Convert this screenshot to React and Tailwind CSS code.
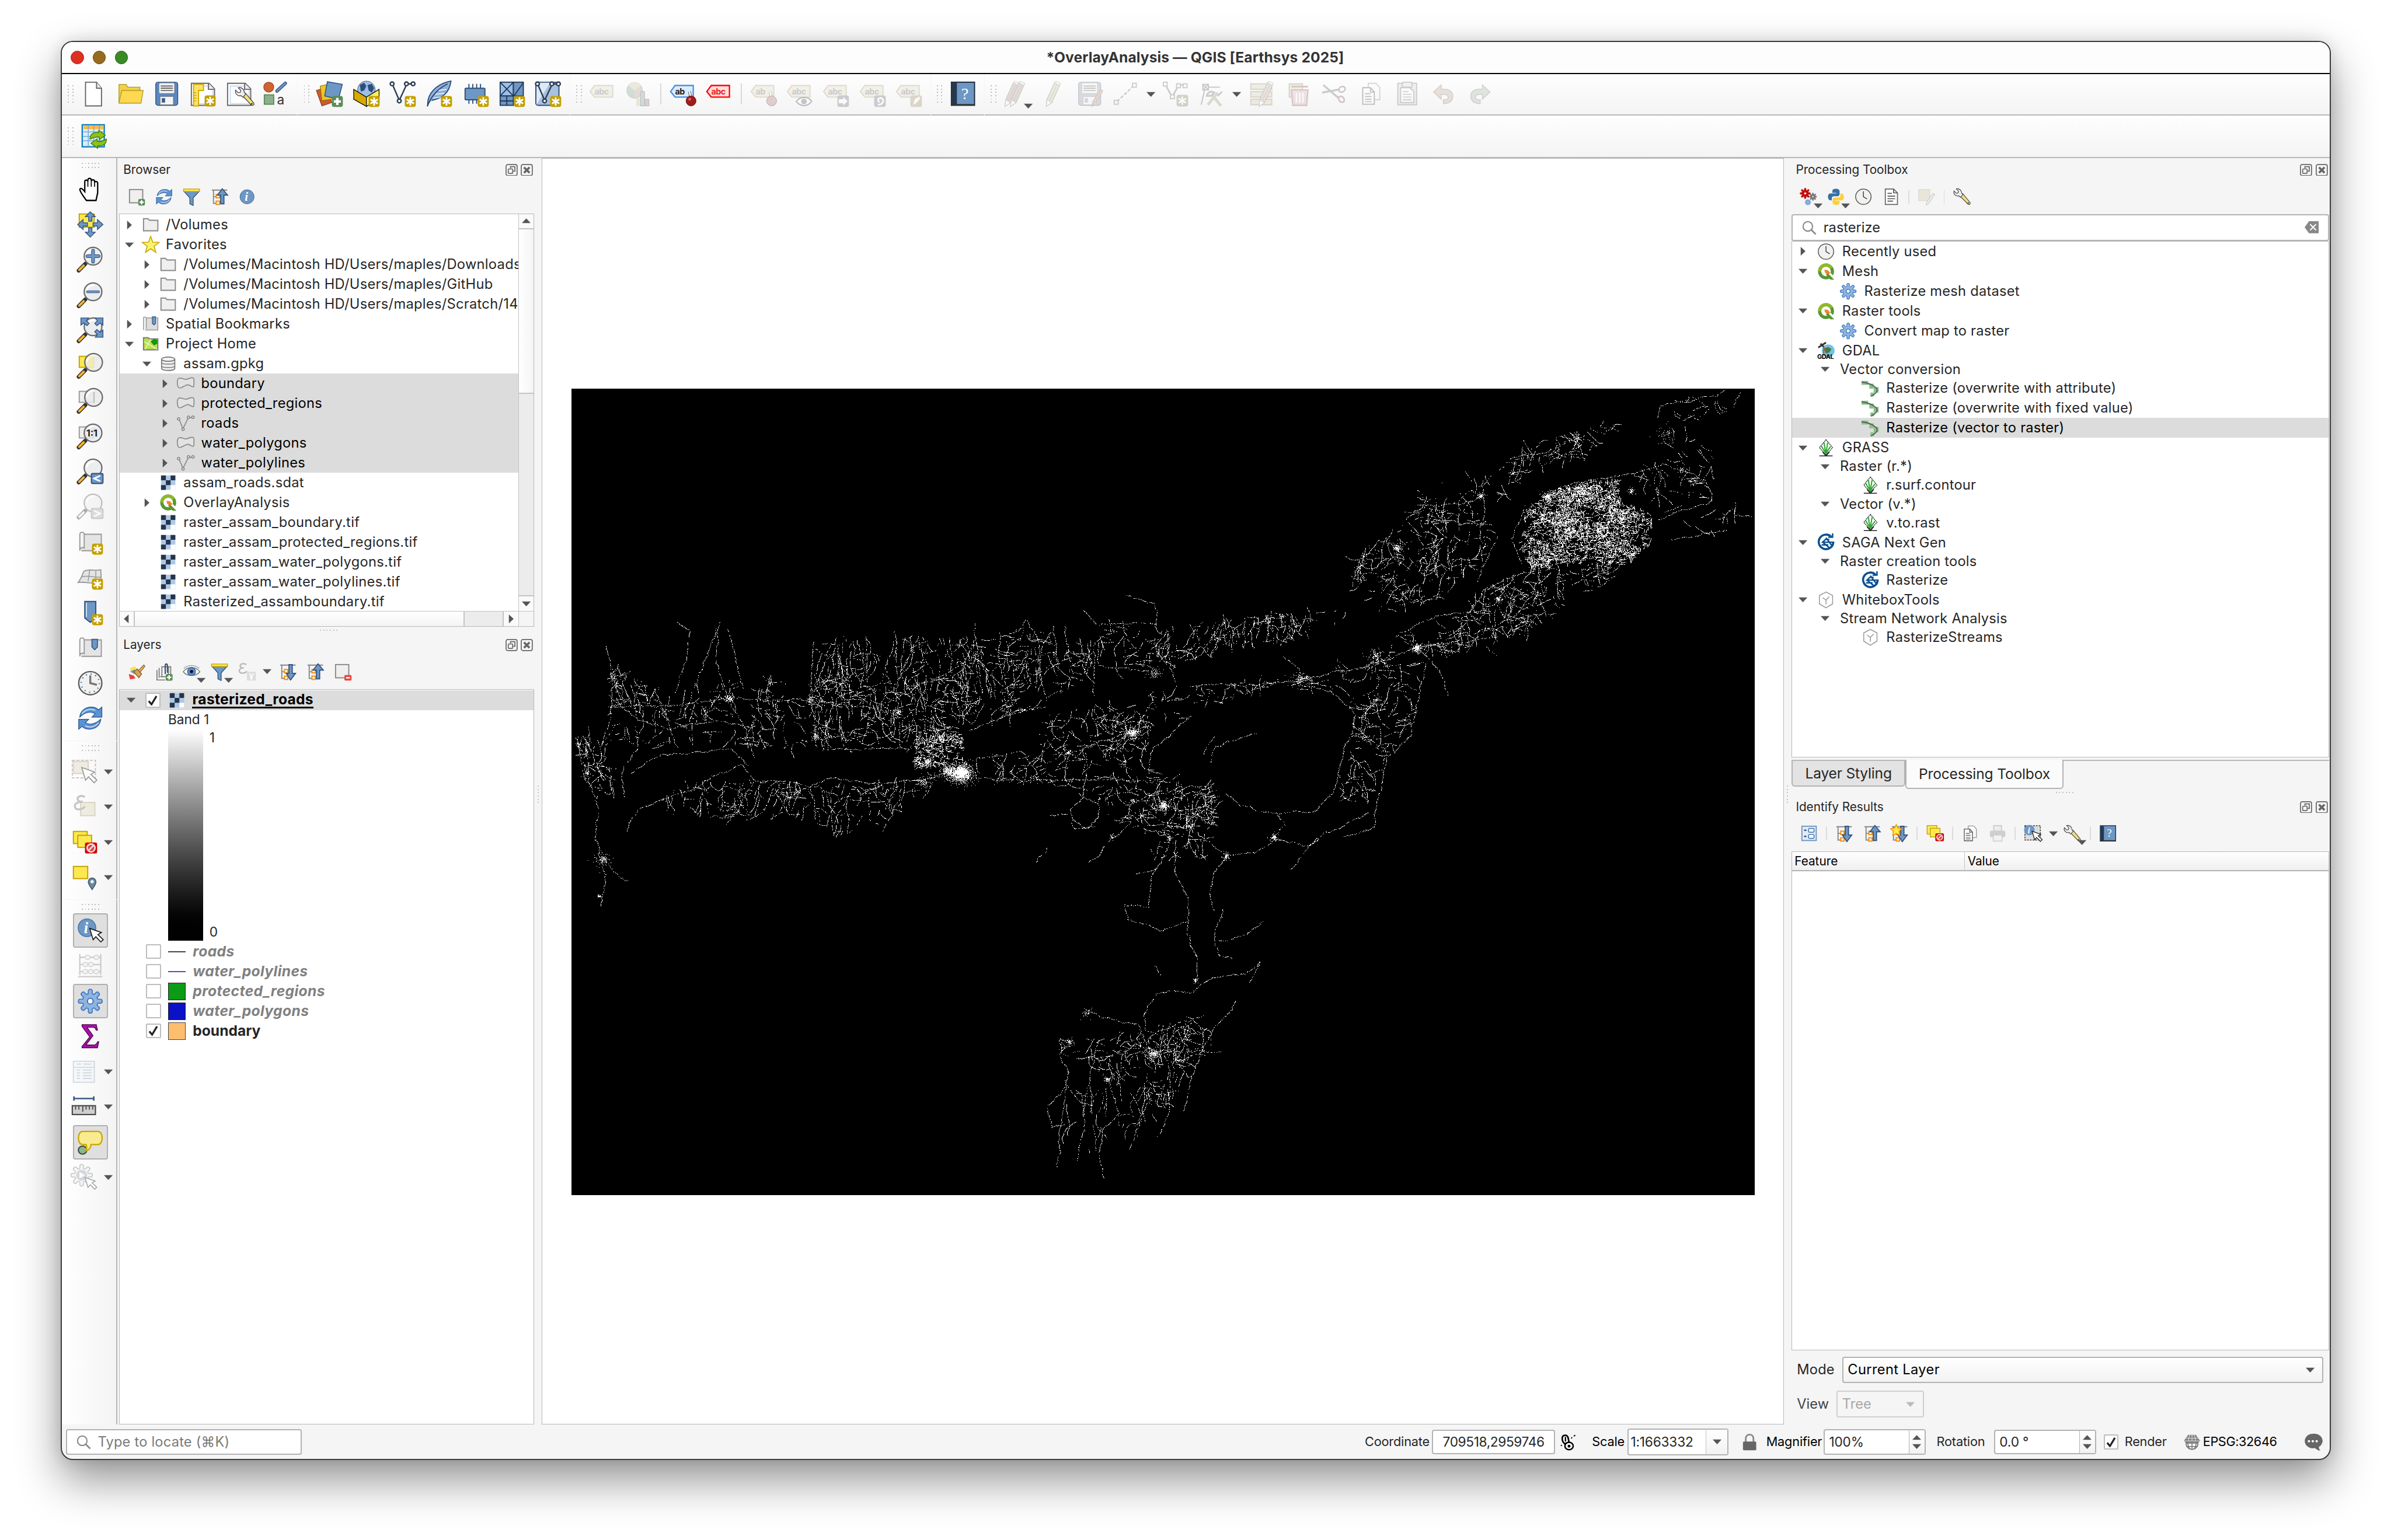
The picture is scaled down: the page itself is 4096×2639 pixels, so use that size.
import React, { useMemo } from "react";

/* ---------- icon helpers ---------- */
const S = ({ c = "size-6", v = "0 0 24 24", children }) => (
  <svg viewBox={v} className={c + " block shrink-0 overflow-visible"} fill="none">{children}</svg>
);
const Star = ({ x = 14, y = 14, s = 1 }) => (
  <g transform={`translate(${x} ${y}) scale(${s})`}>
    <rect x="0" y="0" width="10" height="10" rx="2" fill="#c4a000" />
    <path d="M5 1.2v7.6M1.7 3.1l6.6 3.8M8.3 3.1L1.7 6.9" stroke="#fff" strokeWidth="1.5" />
  </g>
);
const Plus = ({ x = 14, y = 14, s = 1 }) => (
  <g transform={`translate(${x} ${y}) scale(${s})`}>
    <rect width="10" height="10" rx="2" fill="#5a8c5a" />
    <path d="M5 1.8v6.4M1.8 5h6.4" stroke="#fff" strokeWidth="2.2" />
  </g>
);
const Cursor = ({ t }) => (
  <path transform={t} d="M0 0l2.6 8.6 2-2.3 3.8 4 1.8-1.8-4-3.8 2.6-1.6z" fill="#fff" stroke="#111" strokeWidth=".7" />
);
const Forbid = ({ x, y, s = 1 }) => (
  <g transform={`translate(${x} ${y}) scale(${s})`}>
    <rect width="11" height="10" rx="1.5" fill="#d40000" />
    <circle cx="5.5" cy="5" r="3.6" stroke="#f4dada" strokeWidth="1.4" fill="#d84040" />
    <path d="M3.2 7.3l4.6-4.6" stroke="#f4dada" strokeWidth="1.4" />
  </g>
);

/* ---------- main tool bar ---------- */
const NewDoc = () => (
  <S><path d="M4.5 1.5h10l4.5 5.5v16H4.5z" fill="#fff" stroke="#666" /><path d="M14.5 1.5V7H19" fill="#e8e8e8" stroke="#666" /></S>
);
const Open = () => (
  <S><path d="M2 20.5V3.5h6.5L10 6h11v3" fill="#f5cf45" stroke="#ab9a2b" strokeWidth=".7" /><path d="M2 20.5L4.5 9H24l-2 11.5z" fill="#fdd850" stroke="#b39a2b" strokeWidth=".7" /></S>
);
const Save = ({ pencil }) => (
  <S>
    <rect x="2" y="1.5" width="20" height="21" rx="2" fill={pencil ? "#9aa6b4" : "#5b87c0"} stroke={pencil ? "#667" : "#35507a"} strokeWidth=".7" />
    <rect x="5" y="2.2" width="14" height="9.5" rx="1" fill="#f4f4f4" stroke="#888" strokeWidth=".5" />
    <path d="M6.5 5h11M6.5 7h11M6.5 9h11" stroke="#555" strokeWidth=".9" />
    <rect x="6" y="14.5" width="12" height="7.5" rx=".6" fill="#f4f4f4" stroke="#777" strokeWidth=".5" />
    <rect x="7.5" y="16" width="3" height="4" fill={pencil ? "#99a" : "#3a5d8c"} />
    {pencil && <path d="M22 8l2 1.5-7 11-3 3 .8-4.5z" fill="#cc9988" stroke="#765" strokeWidth=".6" />}
  </S>
);
const Layout = () => (
  <S>
    <path d="M1.5 2.5h16l5 5v15h-21z" fill="#fff" stroke="#666" /><path d="M4 5h13v3h4v13H4z" stroke="#c9dbf6" strokeWidth="1" />
    <path d="M17 2.5v5.5h5.5" fill="#eee" stroke="#666" />
    <path d="M3.5 3.500h9v5.500H8v14H3.500z" fill="#fce468" stroke="#d4a800" /><path d="M4 11h2M4 13.500h2M4 16h2M4 18.500h2" stroke="#c4a000" strokeWidth=".7" />
    <Star x={13.500} y={13.500} />
  </S>
);
const WrenchG = ({ t }) => (
  <g transform={t}>
    <path d="M9.500 7.500l1.800-1.300 8.700 10.500c1.100 1.600-.9 3.400-2.400 2.200L8.800 9.800z" fill="#f3dd83" stroke="#333" strokeWidth=".7" />
    <path d="M1 3.200C-.2 6.500 3 10 6.800 9l1.900 1.800 2.900-3.600-1.400-1.500C10 2.300 7-.3 3.700.6l2.600 2.800-.5 2.100-2.200.4z" fill="#eee" stroke="#444" strokeWidth=".8" />
    <circle cx="18" cy="17.500" r="1" fill="#555" />
  </g>
);
const LayoutManager = () => (
  <S>
    <path d="M1.500 2.500h16l5 5v15h-21z" fill="#fff" stroke="#666" /><path d="M4 5h13v3h4v13H4z" stroke="#c9dbf6" /><path d="M17 2.500v5.500h5.500" fill="#eee" stroke="#666" />
    <WrenchG t="translate(8 6) scale(.86)" />
  </S>
);
const StyleMgr = () => (
  <S>
    <circle cx="5.500" cy="6" r="4.500" fill="#ce6432" stroke="#a04a20" strokeWidth=".7" /><path d="M20.500 2.500l-7.500 7" stroke="#2d4f7c" strokeWidth="3" strokeLinecap="round" /><path d="M20.500 2.500l-7.500 7" stroke="#6d97c4" strokeWidth="1.600" strokeLinecap="round" />
    <rect x="1.500" y="13" width="8.500" height="8.500" fill="#8fb08f" stroke="#5a8c5a" />
    <text x="13" y="21.500" fontSize="12" fill="#333">a</text>
  </S>
);
const DataSource = () => (
  <S>
    <path d="M0 9l8-2.500L14 20 5 23z" fill="#ce5b2a" stroke="#80391b" strokeWidth=".6" /><path d="M3.500 5l9-2 2.500 14-10 1.200z" fill="#edc526" stroke="#8a7010" strokeWidth=".6" />
    <path d="M10 1l13.500 2.500L20 17 7.500 14z" fill="#6d97c4" stroke="#2d4f7c" strokeWidth=".8" /><Plus />
  </S>
);
const Geopackage = () => (
  <S>
    <circle cx="12" cy="8.500" r="8" fill="#9dbfe6" stroke="#456" strokeWidth=".5" /><path d="M6 4l4-2 2 3-2 4-3 1zM13 4l4-1 2 4-2 4-3-2z" fill="#2d4f7c" />
    <path d="M.5 8L12 15v8.500L.5 17z" fill="#d6aa00" stroke="#111" strokeWidth=".7" /><path d="M23.500 8L12 15v8.500L23.500 17z" fill="#fcf060" stroke="#111" strokeWidth=".7" /><Star />
  </S>
);
const VPath = ({ c = "#2d3f57", w = 1.300 }) => (
  <g stroke={c} strokeWidth={w} fill="#fff"><path d="M3 4l6 14M9 18l6.500-14M17 3h4" /><circle cx="2.500" cy="3" r="1.700" /><circle cx="9" cy="18.500" r="1.700" /><circle cx="15.500" cy="3" r="1.700" /><circle cx="21.500" cy="3" r="1.700" /></g>
);
const NewShape = () => (<S><VPath /><Star /></S>);
const Feather = () => (
  <S><path d="M2 23C1 12 10 3 23 .5c-1 9-6 15.500-17.500 17.500" fill="#8fb1da" stroke="#2d4f7c" strokeWidth="1" /><path d="M1.500 23.500C5 14 12 7 20 3" stroke="#203a5c" strokeWidth=".9" /><path d="M7 16l7-1M9 12.500l8-1M12 9l7-1" stroke="#fff" strokeWidth=".7" /><Star /></S>
);
const Chip = () => (
  <S><path d="M6 3v18M9.500 3v18M13 3v18M16.500 3v18" stroke="#2d4f7c" strokeWidth="1" /><rect x="2.500" y="7" width="18" height="10.500" rx="1" fill="#6d97c4" stroke="#2d4f7c" /><Star /></S>
);
const Mesh = () => (
  <S><rect x="1.500" y="1.500" width="12" height="12.500" fill="#9dbfe6" stroke="#203a5c" /><path d="M1.500 1.500l12 12.500M13.500 1.500l-12 12.500" stroke="#203a5c" /><rect x="13.500" y="1.500" width="9" height="12.500" fill="#6d97c4" stroke="#203a5c" /><path d="M14 14L22.500 2" stroke="#203a5c" /><rect x="1.500" y="14" width="12" height="8.500" fill="#6d97c4" stroke="#203a5c" /><path d="M7.500 14v8.500M1.500 18.500h12" stroke="#203a5c" /><Star /></S>
);
const Virtual = () => (
  <S><rect x="1" y="1.500" width="21" height="21" rx="2" fill="#a9c0de" stroke="#2d4f7c" /><path d="M1.500 22L14 2h-12z" fill="#dfe9f5" /><VPath /><Star /></S>
);
const TagShape = ({ red, blue, txt = "abc" }) => (
  <g>
    <path d="M1 10l4-5.500h16.500V15H5z" fill={red ? "#ffdede" : blue ? "#dcecff" : "#e4dfc6"} stroke={red ? "#f00" : blue ? "#4a90e2" : "#a8a180"} strokeWidth={red || blue ? 1.200 : 1} />
    <text x="5" y="12.600" fontSize="7.600" fontWeight="700" fill={red ? "#e22" : blue ? "#222" : "#777"} letterSpacing="-.3">{txt}</text>
  </g>
);
const Tag = ({ red }) => (<S><TagShape red={red} /></S>);
const PinTag = ({ blue }) => (
  <S><TagShape blue={blue} txt="ab" /><path d="M18 10l1.500 6" stroke="#555" strokeWidth="2.600" /><path d="M18 10l1.500 6" stroke="#fff" strokeWidth="1.500" /><circle cx="19.500" cy="18.500" r="4.500" fill={blue ? "#a01c1c" : "#a88"} stroke="#600" strokeWidth=".5" /><circle cx="18.300" cy="17" r="1.300" fill="#d66" /></S>
);
const Diagram = () => (
  <S><circle cx="8.500" cy="9" r="7" fill="#c0a0a0" stroke="#777" strokeWidth=".7" /><path d="M8.500 9v7A7 7 0 0 1 3 4.500z" fill="#8aa898" /><path d="M8.500 9L3 4.500a7 7 0 0 1 11 0z" fill="#d0c99c" /><rect x="10" y="16" width="4" height="7" fill="#d0c99c" /><rect x="14" y="10" width="3.500" height="13" fill="#8aa898" stroke="#555" strokeWidth=".6" /><rect x="18" y="17" width="3.500" height="6" fill="#a88" stroke="#555" strokeWidth=".6" /></S>
);
const EyeTag = () => (<S><TagShape /><path d="M9 19c4-5 11-5 14 0-4 5-10 5-14 0z" fill="#fff" stroke="#444" /><circle cx="16" cy="19" r="2.600" fill="#667" /></S>);
const BadgeTag = ({ k }) => (
  <S><TagShape /><rect x="13.500" y="13.500" width="10.500" height="10.500" rx="2" fill={k === 2 ? "#a79a70" : "#777e86"} />
    {k === 0 && <path d="M14.800 17h4v-2l4 3.800-4 3.800v-2h-4z" fill="#fff" />}
    {k === 1 && <path d="M17 22c5 0 6-5 3-6s-4 3-1.500 3.500" stroke="#fff" strokeWidth="1.600" />}
    {k === 2 && <path d="M16 22l1.500-5 4-2.500.8 2-3.500 4z" fill="#fff" />}
  </S>
);
const Help = ({ c = "size-6" }) => (
  <S c={c}><rect x="1.500" y="1.500" width="21" height="21" fill="#6d97c4" stroke="#1c2733" /><rect x="2" y="2" width="4.500" height="20" fill="#25384d" /><path d="M2 22h20" stroke="#333" strokeWidth="1.500" /><text x="10.500" y="17" fontSize="15" fill="#fff" fontFamily="Liberation Serif">?</text></S>
);
const PencilG = ({ t, f = "#e5da9a" }) => (
  <g transform={t}><path d="M5 17.500L12 2l4.500 2.500-7 15.500L4.500 23.500z" fill={f} stroke="#777" strokeWidth=".7" /><path d="M12 2l1-1.500 4.500 2-1 2z" fill="#f4f4f4" stroke="#777" strokeWidth=".5" /><path d="M5 17.500L4.500 23.500l5-3.500z" fill="#fff" stroke="#777" strokeWidth=".5" /><path d="M7.500 18l6.500-14" stroke="#888" strokeWidth=".6" /></g>
);
const Pencils = () => (<S><PencilG t="translate(-3 0)" f="#bfa296" /><PencilG t="translate(2 0)" f="#bfa296" /></S>);
const Pencil = () => (<S><PencilG t="translate(1 0)" f="#d5d0a8" /></S>);
const SegLine = () => (<S><path d="M4 19L20 4" stroke="#777" strokeWidth="1.300" strokeDasharray="3 1.500" /><rect x="1.500" y="18" width="3.500" height="3.500" fill="#fff" stroke="#777" /><rect x="18" y="2.500" width="3.500" height="3.500" fill="#fff" stroke="#777" /></S>);
const VStar = () => (<S><path d="M3 4l6 11 6-11h5" stroke="#777" strokeWidth="1.500" /><g fill="#fff" stroke="#777"><rect x="1" y="1.500" width="3.500" height="3.500" /><rect x="7.500" y="13" width="3.500" height="3.500" /><rect x="13" y="3" width="3.500" height="3.500" /><rect x="19" y="3" width="3.500" height="3.500" /></g><rect x="13" y="13" width="10.500" height="10.500" rx="2" fill="#8f8a6c" /><path d="M18.200 14.500v7.500M14.800 16.300l6.800 3.900M21.600 16.300l-6.800 3.900" stroke="#fff" strokeWidth="1.500" /></S>);
const Vertex = () => (<S><rect x="3.500" y="3.500" width="5" height="5" fill="#fff" stroke="#666" /><path d="M3.500 3.500l5 5M8.500 3.500l-5 5M9 6h10M5 9L2 22" stroke="#666" /><path d="M8 22l9-11" stroke="#a9a180" strokeWidth="2.500" /><path d="M11 12l9 11" stroke="#a9a180" strokeWidth="2.500" /><path d="M7 14c1-4 4-5 7-3l-3 3zM17 14l4-4" stroke="#777" strokeWidth="1.500" fill="#ddd" /></S>);
const FieldsEdit = () => (<S><g fill="#d8d4b8" stroke="#98926c"><rect x="2" y="3" width="19" height="5" /><rect x="2" y="10" width="19" height="5" /><rect x="2" y="17" width="19" height="5" /></g><PencilG t="translate(5 0)" f="#cfb4a8" /></S>);
const Trash = () => (<S><rect x="4" y="3" width="12" height="12" fill="#d8d4b8" stroke="#98926c" /><path d="M6 8.500h15l-1.200 14H7.200z" fill="#d8b8bb" stroke="#9a6a6c" strokeWidth="1.200" /><path d="M6 5.500h15" stroke="#9a6a6c" strokeWidth="1.600" /><path d="M10.500 11v9M13.500 11v9M16.500 11v9" stroke="#fff" strokeWidth="1.200" /></S>);
const Scissors = () => (<S><path d="M2 4l14 12M1 11l16-3" stroke="#777" strokeWidth="1.800" /><ellipse cx="19" cy="8" rx="3" ry="2.400" stroke="#866" strokeWidth="1.400" transform="rotate(-30 19 8)" /><ellipse cx="18.500" cy="17" rx="3" ry="2.200" stroke="#866" strokeWidth="1.400" transform="rotate(50 18.500 17)" /></S>);
const Copy = ({ c = "size-6" }) => (<S c={c}><path d="M9.500 2.500h7l3.500 4v11h-10.500z" fill="#fafafa" stroke="#999" /><path d="M4.500 6.500h7l3.500 4v11H4.500z" fill="#fff" stroke="#555" /><path d="M11.500 6.500v4H15M6.500 12h5M6.500 14.500h6M6.500 17h6M6.500 19.200h6" stroke="#555" strokeWidth=".9" /></S>);
const Paste = () => (<S><rect x="3.500" y="2.500" width="17" height="19.500" fill="#e0dad4" stroke="#777" /><path d="M6 6.500h8.500L18 10v10H6z" fill="#fff" stroke="#777" /><rect x="7.500" y="1.500" width="9" height="4.500" rx="1" fill="#ddd" stroke="#777" /><path d="M8 10h5M8 12.500h8M8 15h8M8 17.500h8" stroke="#888" /></S>);
const Undo = ({ flip }) => (<S><path transform={flip ? "translate(24 0) scale(-1 1)" : ""} d="M3 10.500L10 4v4c8-1 12 3 10 9-1 3-4 4-8 4v-3.500c4 0 5-1.500 4-3.500-1-1.500-3-1.500-6-1.500V17z" fill={flip ? "#aebcb4" : "#c9b0a2"} stroke="#887" strokeWidth=".8" /></S>);
const TableRefresh = () => (
  <S>
    <rect x="1.500" y="1.500" width="20" height="20" fill="#d6f0fa" stroke="#0a7cc0" strokeWidth="1.200" /><rect x="2.500" y="2.500" width="18" height="3" fill="#fbb848" /><path d="M7 2v19M12 2v19M17 2v19M2 8h19M2 12h19M2 16h19" stroke="#7aa8d8" strokeWidth=".8" />
    <path d="M8.500 14.500c0-5 4-6.500 8-6V6.500l6 4.500-5.500 4v-2.300c-3-.5-5 .3-8.500 1.800z" fill="#8ec412" stroke="#3d7a00" strokeWidth=".7" /><path d="M23.500 14.500c0 5-4 6.500-8 6v2.300l-6-4.500 5.500-4v2.300c3 .5 5-.3 8.500-2.100z" fill="#8ec412" stroke="#3d7a00" strokeWidth=".7" />
  </S>
);

/* ---------- map tools ---------- */
const Hand = () => (<S><path d="M8.500 22.500C6 19 3 15.500 2.500 12.500c.3-1.500 2-1.300 4.500 2V5.500c0-2 2.600-2 2.800 0V4c.2-2 3-2 3.100 0v1c.3-1.700 2.900-1.600 3 .2v1c.4-1.400 2.700-1.200 2.800.6v8.700l-1.500 7z" fill="#fff" stroke="#000" strokeWidth="1.200" /><path d="M9.800 5.500V10M12.900 5v5M15.900 6v4" stroke="#000" strokeWidth=".9" /></S>);
const PanSel = () => (<S><rect x="2" y="2.500" width="13.500" height="12" fill="#fce94f" stroke="#c4a000" /><g fill="#6d97c4" stroke="#2d4f7c" strokeWidth=".7"><path d="M12 .5L16.500 5h-3v4h-3V5h-3z" /><path d="M12 23.500L16.500 19h-3v-4h-3v4h-3z" /><path d="M.5 12L5.500 7.500v3h4v3h-4v3z" /><path d="M23.500 12l-5-4.500v3h-4v3h4v3z" /></g></S>);
const Mag = ({ dim, children, cx = 14.500 }) => (
  <g>
    <path d="M1.500 22l6-6" stroke="#333" strokeWidth="3.600" strokeLinecap="round" /><path d="M2 21.500l4-4" stroke={dim ? "#eee" : "#fcb827"} strokeWidth="2" strokeLinecap="round" />
    <circle cx={cx} cy="9" r="8" fill="#e9eaec" fillOpacity=".82" stroke="#6b6b6b" strokeWidth="1.200" />
    <path d="M9 8c0-3 3-5 6-5" stroke="#fff" strokeWidth="1.500" strokeLinecap="round" />{children}
  </g>
);
const ZoomIn = () => (<S><Mag><path d="M14.500 4v10M9.500 9h10" stroke="#2d4f7c" strokeWidth="3.200" strokeLinecap="round" /><path d="M14.500 4v10M9.500 9h10" stroke="#6d97c4" strokeWidth="2.200" strokeLinecap="round" /></Mag></S>);
const ZoomOut = () => (<S><Mag><path d="M9.500 9h10" stroke="#2d4f7c" strokeWidth="2.400" strokeLinecap="round" /><path d="M9.500 9h10" stroke="#6d97c4" strokeWidth="1.500" strokeLinecap="round" /></Mag></S>);
const ZoomFull = () => (<S><Mag /><g fill="#6d97c4" stroke="#2d4f7c" strokeWidth=".7"><path d="M3.500 1h7L8.500 3.500 11 6 9 8 6 5.500l-2.500 2z" /><path d="M23.500 1h-7l2 2.500L16 6l2 2 3-2.500 2.500 2z" /><path d="M23.500 18.500h-7l2-2.500L16 13.500l2-2 3 2.500 2.500-2z" /></g></S>);
const ZoomSel = () => (<S><rect x="2" y="3.500" width="13" height="10" fill="#fce94f" stroke="#c4a000" /><Mag cx={15}><path d="M11 3h4v12h-4z" fill="#f5ec9c" opacity=".6" /></Mag></S>);
const ZoomLayer = () => (<S><rect x="2" y="3.500" width="13" height="10" fill="#eee" stroke="#999" /><Mag cx={15}><path d="M15.500 4v10" stroke="#bbb" /></Mag></S>);
const ZoomNative = () => (<S><rect x="2" y="3.500" width="13" height="10" fill="#eee" stroke="#999" /><Mag><text x="8.300" y="12" fontSize="8.600" fontWeight="700" fill="#222">1:1</text></Mag></S>);
const ZoomLast = ({ next }) => (<S><Mag dim={next} /><rect x="13" y="14" width="10.500" height="9" rx="1" fill={next ? "#aab2bc" : "#6d97c4"} stroke={next ? "#888" : "#2d4f7c"} /><path d={next ? "M15.500 16l5.500 2.500-5.500 2.500" : "M21 16l-5.500 2.500 5.500 2.500"} stroke="#fff" strokeWidth="1.500" /></S>);
const MapScroll = ({ mark }) => (<S><path d="M4 5h18v15H4" fill="#e4e4e4" stroke="#999" /><path d="M2.500 19.500v-14c0-3 4-3 4 0v12c-2-1-4 0-4 2.500z" fill="#f4f4f4" stroke="#999" />{mark ? <path d="M13.500 4.500h5v7L16 14l-2.500-2.500z" fill="#6d97c4" stroke="#2d4f7c" strokeWidth=".8" /> : <Star x={13.500} y={13.500} />}</S>);
const Map3d = () => (<S><path d="M1 17C4 13 5 10 6 7c5-3 10 0 15.500-1.500L22 17c-7 2-14-1-21 0z" fill="#e4e4e4" stroke="#999" /><path d="M11.500 6L10 16M17 6.500v10M4 12c6-2 12 1 18 0" stroke="#999" strokeWidth=".8" /><Star x={13.500} y={13.500} /></S>);
const BookmarkNew = () => (<S><path d="M7 2h10v15l-5 4-5-4z" fill="#6d97c4" stroke="#2d4f7c" /><path d="M8.500 3v13" stroke="#cfe0f3" /><Star x={13.500} y={13.500} /></S>);
const Clock = ({ c = "size-6", simple }) => (<S c={c}><circle cx="12" cy="12" r="10.500" fill="#f1f1ef" stroke="#5a5a5a" strokeWidth="1.200" />{!simple && <circle cx="12" cy="12" r="8.300" stroke="#4a79b5" strokeWidth="1.300" strokeDasharray="1 3.350" />}<path d={simple ? "M12 4.500V12l5 3" : "M12 5v7l6 1.500"} stroke={simple ? "#444" : "#777"} strokeWidth={simple ? 1.200 : 1.800} /></S>);
const Refresh = ({ c = "size-6" }) => (<S c={c}><path d="M2.500 11C3 5 8 2 13 2c3 0 5 1 6.500 2.500L22.500 2v9h-9l3-3C14 6 8 5.500 2.500 11z" fill="#5b92d4" stroke="#2d5a94" strokeWidth=".7" /><path d="M21.500 13c-.5 6-5.500 9-10.500 9-3 0-5-1-6.500-2.500L1.500 22v-9h9l-3 3c2.500 2 8.500 2.500 14-3z" fill="#5b92d4" stroke="#2d5a94" strokeWidth=".7" /><path d="M4.500 8c3-4 8-5 12-3M19.500 16c-3 4-8 5-12 3" stroke="#bfd8f4" /></S>);
const SelRect = () => (<S><rect x="1.500" y="1.500" width="21" height="16" stroke="#777" strokeDasharray="2.500 1.500" /><rect x="2.500" y="2.500" width="13.500" height="11" fill="#ddd6b8" stroke="#a99f70" /><Cursor t="translate(10 8) scale(1.350)" /></S>);
const SelExpr = ({ c = "size-6" }) => (<S c={c}><rect x="9" y="8" width="13" height="12" fill="#ddd6b8" stroke="#a99f70" /><path d="M13 3C9 1 5.500 3 6.500 5.500 7 7 9 7.500 11 7.300 6 7.500 3 9.500 4 12.500c1 2.500 6.500 2.500 9-1" stroke="#777" strokeWidth="1.800" /></S>);
const Desel = ({ c = "size-6" }) => (<S c={c}><rect x="2.500" y="2" width="12.500" height="11" fill="#fce94f" stroke="#c4a000" /><rect x="6.500" y="5.500" width="12.500" height="11" fill="#fce94f" stroke="#c4a000" /><Forbid x={13} y={12} /></S>);
const SelPin = () => (<S><rect x="2.500" y="2" width="13" height="11" fill="#fce94f" stroke="#c4a000" /><path d="M19.500 23c-2-3.500-3.500-4.500-3.500-7a3.500 3.500 0 0 1 7 0c0 2.500-1.500 3.500-3.500 7z" fill="#6b8aa3" stroke="#456" strokeWidth=".8" /><circle cx="19.500" cy="15.800" r="1.400" fill="#fff" /></S>);
const Info = ({ c = "size-6" }) => (<S c={c}><circle cx="12" cy="12" r="11" fill="#6d97c4" stroke="#3c6393" strokeWidth=".8" /><text x="8.500" y="18.500" fontSize="19" fontWeight="700" fontStyle="italic" fill="#fff" fontFamily="Liberation Serif">i</text></S>);
const Identify = () => (<S><circle cx="9" cy="9.500" r="8" fill="#6d97c4" stroke="#4775ab" strokeWidth=".8" /><text x="6.200" y="14.500" fontSize="14" fontWeight="700" fontStyle="italic" fill="#fff" fontFamily="Liberation Serif">i</text><Cursor t="translate(11.500 10) scale(1.200)" /></S>);
const Abacus = () => (<S><path d="M2.500 1.500v19M21.500 1.500v19M1 22h22M3 4.500h18M3 11h18M3 17.500h18" stroke="#888" strokeWidth="1.200" /><g fill="#efe6e6" stroke="#999" strokeWidth=".8"><ellipse cx="9.500" cy="4.500" rx="2.300" ry="2" /><ellipse cx="17.500" cy="4.500" rx="2.300" ry="2" /><ellipse cx="7.500" cy="11" rx="2.300" ry="2" /><ellipse cx="12.500" cy="11" rx="2.300" ry="2" /><ellipse cx="7.500" cy="17.500" rx="2.300" ry="2" /><ellipse cx="12.500" cy="17.500" rx="2.300" ry="2" /><ellipse cx="17.500" cy="17.500" rx="2.300" ry="2" /></g></S>);
const GearG = ({ f, st, cx = 12, cy = 12, s = 1, hole = "#fff" }) => (
  <g transform={`translate(${cx} ${cy}) scale(${s})`}>
    {[0, 45, 90, 135].map((a) => (<rect key={a} x="-1.800" y="-10.800" width="3.600" height="21.600" rx="1.600" transform={`rotate(${a})`} fill={f} stroke={st} strokeWidth=".9" />))}
    <circle r="7" fill={f} stroke={st} strokeWidth=".9" />
    {[0, 45, 90, 135].map((a) => (<rect key={a} x="-1.400" y="-8" width="2.800" height="16" transform={`rotate(${a})`} fill={f} />))}
    <circle r="2.600" fill={hole} stroke={st} strokeWidth="1.100" />
  </g>
);
const Gear = ({ c = "size-6" }) => (<S c={c}><GearG f="#8db4e2" st="#3f76bd" /></S>);
const Sigma = () => (<S><path d="M4.500 1.500h13l1 5h-1.200c-.6-2-1.300-2.600-3.800-2.600H9l5.500 7.600L8 20h6.500c2.500 0 3.500-1 4.200-3h1l-1.200 5.500h-14v-1.200l7-8.600-7-9.700z" fill="#ad11ad" stroke="#4a084a" strokeWidth=".7" /></S>);
const TableI = () => (<S><rect x="2.500" y="2.500" width="19" height="19" fill="#eef3f6" stroke="#9ab" /><path d="M3 8h18" stroke="#9ab" /><path d="M5.500 5h4M11.500 5h7M5.500 10.500h3M11 10.500h8M5.500 13h3M11 13h8M5.500 15.500h3M11 15.500h8M5.500 18h3M11 18h8" stroke="#9ab" strokeWidth="1.100" /></S>);
const Ruler = () => (<S><path d="M3 4.500h18M3 2.500v4M21 2.500v4" stroke="#3c5a80" strokeWidth="1.400" /><rect x="1.500" y="11" width="21" height="8" fill="#cfcfcf" stroke="#444" strokeWidth="1.100" /><path d="M4.500 11.500v3M7.500 11.500v3M11 11.500v5M14 11.500v3M17 11.500v3M20 11.500v3" stroke="#444" strokeWidth=".9" /></S>);
const Tips = () => (<S><ellipse cx="5" cy="19" rx="3.800" ry="3.600" fill="#8ab88a" stroke="#444" strokeWidth="1.100" /><path d="M5 2h14c5 0 5 12 0 12h-6.500c.3 3-2 5-5 6 1.500-2 1.500-4 .8-6H5c-5 0-5-12 0-12z" fill="#f9eb8f" stroke="#c9a800" strokeWidth="1.200" /></S>);
const RunGear = () => (<S><GearG f="#eee" st="#777" cx={10} cy={10} s={.9} hole="#9aa4ae" /><circle cx="10" cy="10" r="5" fill="#9aa4ae" /><path d="M8 7l5 3-5 3z" fill="#fff" /><Cursor t="translate(13 12) scale(1.050)" /></S>);

/* ---------- small icons ---------- */
const Folder = () => (<S c="size-4" v="0 0 16 16"><path d="M1.500 13.500v-11h4l1.500 1.500h7.500v9.500z" fill="#efefef" stroke="#888" strokeWidth="1" /></S>);
const StarI = () => (<S c="size-4" v="0 0 16 16"><path d="M8 .5l1.900 5.300 5.700.2-4.500 3.500 1.600 5.500L8 11.800 3.300 15l1.600-5.500L.4 6l5.700-.2z" fill="#fdf468" stroke="#c4a000" strokeWidth=".8" /></S>);
const SBook = () => (<S c="size-4" v="0 0 16 16"><path d="M3 2.500h11.500v11H3" fill="#ddd" stroke="#999" strokeWidth=".8" /><path d="M1.500 13.500v-11c0-1 2-1 2.500 0v10" fill="#f4f4f4" stroke="#999" strokeWidth=".8" /><path d="M9.500 1.500h3v6L11 9 9.500 7.500z" fill="#6d97c4" stroke="#2d4f7c" strokeWidth=".6" /></S>);
const PHome = () => (<S c="size-4" v="0 0 16 16"><path d="M1.500 13.500v-11h4l1.500 1h7.500v10z" fill="#b9e04e" stroke="#777" /><path d="M2 6l12 7M8 4l-5 9" stroke="#e9f7c0" strokeWidth=".8" /><path d="M8 6l3-2.500 3 1V8l-3 1.500z" fill="#17940f" /></S>);
const Db = () => (<S c="size-4" v="0 0 16 16"><path d="M2 4v8.500c0 2.300 12 2.300 12 0V4" fill="#eee" stroke="#777" strokeWidth=".9" /><path d="M2 7c0 2 12 2 12 0M2 10c0 2 12 2 12 0" stroke="#777" strokeWidth=".8" /><ellipse cx="8" cy="4" rx="6" ry="1.900" fill="#f4f4f4" stroke="#777" strokeWidth=".9" /></S>);
const Poly = () => (<S c="size-4" v="0 0 16 16"><path d="M1.200 3.800C3 1.500 6 5 9 4.200c2.500-.8 4-2 6-1.200.8.500.6 6.500.2 7.800-1 1.200-3.500-2-5.700-1.600-2.500.5-6.500 4-7.800 2.600C.2 10.500 0 5.500 1.200 3.800z" fill="#e2e2e2" stroke="#8a8a8a" strokeWidth=".9" /></S>);
const LineI = () => (<S c="size-4" v="0 0 16 16"><g stroke="#8a8a8a" strokeWidth=".9" fill="#eee"><path d="M2 4.500l3.500 8.500 5-10h4" fill="none" /><circle cx="1.600" cy="4.200" r="1.100" /><circle cx="5.600" cy="13.500" r="1.100" /><circle cx="10.500" cy="2.600" r="1.100" /><circle cx="14.600" cy="2.600" r="1.100" /></g></S>);
const Raster = () => (<S c="size-4" v="0 0 16 16"><rect x="1.500" y="1.500" width="13" height="13" fill="#adc8e8" /><path d="M1.500 1.500h4.400v4.300H1.500zM10.200 1.500h4.300v4.300h-4.300zM5.900 5.800h4.300v4.400H5.900zM1.500 10.200h4.400v4.300H1.500z" fill="#26344a" /><path d="M10.200 10.200h4.300v4.300h-4.300z" fill="#fff" /></S>);
const Qgis = () => (<S c="size-4" v="0 0 16 16"><circle cx="8" cy="8" r="5.800" stroke="#589632" strokeWidth="2.900" /><path d="M2.200 8A5.800 5.800 0 0 1 13 5" stroke="#8fb92a" strokeWidth="2.900" /><path d="M7 7l2.500-.5L15.500 13v2.500H13L6.500 9z" fill="#fff" /><path d="M9 9l6.500 6.500h-3.500L8 11z" fill="#589632" /><path d="M6.500 6.500l3 .3L12 9.500 9.500 11 7 9z" fill="#ee7913" opacity=".9" /></S>);
const Gdal = () => (<S c="size-4" v="0 0 16 16"><circle cx="10" cy="8" r="5.800" fill="#6ec3e8" /><path d="M6 6l4-1.500 3 2-2 3-3 1z" fill="#4a7a3a" /><path d="M1 5l7-4.500M3 1.500l3 3" stroke="#333" strokeWidth="1.600" /><path d="M6 4v7" stroke="#d33" /><text x="0" y="15.500" fontSize="5.800" fontWeight="700" fill="#000" letterSpacing="-.25">GDAL</text></S>);
const Vec2R = () => (<S c="size-4" v="0 0 16 16"><path d="M0 1.500h6V4h5v3h4.500v5h-4v3.500H8V12h3V8.500H7V5H0z" fill="#8cbf8c" /><path d="M0 2.500c5 .5 10 2 13.500 5.500 2 3-1 5-5 7.500" stroke="#4a6a50" strokeWidth="1" /></S>);
const Grass = () => (<S c="size-4" v="0 0 16 16"><path d="M8 .8L14 8l-6 6.500L2 8z" fill="#fff" stroke="#222" strokeWidth=".7" strokeDasharray="1.200 .5" /><path d="M8 13.500C6 10 4.500 8 3.800 6.500M8 13.500C7 9 6.500 6 6.300 3.500M8 13.500c.5-4 1-7 1.500-10M8 13.500c1.500-3 3-5 4.200-6.500" stroke="#2eab2e" strokeWidth="1.100" /><path d="M2 15.500h12M5 12l3 3.500 3-3.500" stroke="#222" strokeWidth=".9" /></S>);
const Saga = () => (<S c="size-4" v="0 0 16 16"><path d="M12.800 3.200A6.600 6.600 0 1 0 14.600 8" stroke="#0b4f93" strokeWidth="1.900" /><path d="M11 5.500H7.500L5 8h10.500M5 8l6 5M4 10.500h6M8 4l6 8M10 3.500h4V0" stroke="#0b4f93" strokeWidth="1.300" /></S>);
const Cube = () => (<S c="size-4" v="0 0 16 16"><path d="M8 .8l6 3.200v7.500L8 15.200 2 11.500V4zM5 6l3 2 3-3M8 8v4" stroke="#999" strokeWidth=".8" /></S>);
const FilterI = () => (<S c="size-4" v="0 0 16 16"><path d="M1 3l5.500 6v5.500L9.500 16V9L15 3z" fill="#6d97c4" stroke="#2d4f7c" strokeWidth=".7" /><path d="M.8 1h14.400v2.200H.8z" fill="#fce94f" stroke="#c4a000" strokeWidth=".7" /></S>);
const Collapse = ({ down, star }) => (<S c="size-4" v="0 0 16 16"><path d="M1 2h14M2.500 2v12.500M2.500 8h3M2.500 14h3" stroke="#888" strokeWidth="1" /><rect x="5" y="6" width="3" height="3" fill="#fff" stroke="#f39214" strokeWidth="1.100" /><rect x="5" y="12" width="3" height="3" fill="#fff" stroke="#f39214" strokeWidth="1.100" /><path d={down ? "M9 1.500h3v8h3L10.500 15.500 6.500 9.500H9z" : "M9 14.500h3v-8h3.300L10.500.8 6 6.500h3z"} fill="#6d97c4" stroke="#2d4f7c" strokeWidth=".9" />{star && <path d="M5 0l1.500 3.300 3.500.4L7.500 6l.7 3.800L5 8 1.800 9.800 2.500 6 0 3.700l3.500-.4z" fill="#fdf03a" stroke="#f39214" strokeWidth=".8" />}</S>);
const AddBox = ({ minus }) => (<S c="size-4" v="0 0 16 16"><rect x="1.500" y="1.500" width="12" height="12" fill="#efefed" stroke="#888" />{minus ? <g><rect x="9.500" y="11" width="6.500" height="5" rx="1" fill="#ef4444" /><path d="M11 13.500h3.500" stroke="#fff" strokeWidth="1.300" /></g> : <Plus x={9.500} y={10} s={.6} />}</S>);
const Brush = () => (<S c="size-4" v="0 0 16 16"><path d="M1.500 5l5-2 3 5-4 3z" fill="#f8e34a" /><path d="M2 8l4-2 2 5z" fill="#6d97c4" /><path d="M.8 10l4.500 1.500L7 14l-5 1z" fill="#ef3d3d" /><path d="M5.500 8l3-2.500 4 4.500-2.500 3.500z" fill="#dba15a" stroke="#8a5a20" strokeWidth=".7" /><path d="M9.500 7l5-5.200 1 1.200-4.500 5.500z" fill="#e8b070" stroke="#8a5a20" strokeWidth=".6" /></S>);
const AddGroup = () => (<S c="size-4" v="0 0 16 16"><path d="M4.500 12.500H12v-9H6v9M1.500 6.500v9H9M3.500 4.500v9M6 3.500h8v8" stroke="#777" strokeWidth=".9" /><path d="M9 10V2.500c0-2 2-2 2 0V9" stroke="#2d4f7c" strokeWidth="1.100" /><Plus x={9.500} y={10} s={.62} /></S>);
const EyeI = () => (<S c="size-4" v="0 0 16 16"><path d="M.5 8C4 3 12 3 15.500 8 12 12.500 4 12.500.5 8z" fill="#fff" stroke="#888" strokeWidth=".9" /><path d="M1 5c4-3.500 10-3.500 14 0" stroke="#aaa" strokeWidth=".9" /><circle cx="8" cy="7.800" r="3.600" fill="#5b92d4" stroke="#2d4f7c" strokeWidth=".6" /><circle cx="8" cy="7.800" r="1.500" fill="#112" /></S>);
const ExprFilter = () => (<S c="size-4" v="0 0 16 16"><path d="M7.500 1.500C4-.5 1 1.500 2 3.500c.5 1 2 1 3 1-2 0-4 .8-4 2.700 0 2.800 5 2.600 7 .4" stroke="#bbb" strokeWidth="1.300" /><rect x="8" y="8" width="8" height="8" fill="#ddd" /><path d="M10 9.500l1.500 2V15M14 9.500l-1.500 2V15" stroke="#fff" /></S>);
const RedGears = () => (<S c="size-4" v="0 0 16 16"><GearG f="#c40f0f" st="#c40f0f" cx={5} cy={5} s={.44} /><GearG f="#777" st="#777" cx={12} cy={8} s={.32} /><GearG f="#6fa0dc" st="#6fa0dc" cx={7.500} cy={13} s={.26} /></S>);
const Python = () => (<S c="size-4" v="0 0 16 16"><path d="M8 .8C5 .8 4.800 2 4.800 3v1.500h3.500V5H3C1.500 5 .8 6.300.8 8s.7 3.200 2.200 3.200h1.300V9.300C4.300 8 5.300 7.500 6.500 7.500h3c1 0 1.800-.8 1.800-1.800V3C11.300 1.600 10 .8 8 .8z" fill="#3571a3" /><path d="M8 15.500c3 0 3.300-1.200 3.300-2.200v-1.500H7.800v-.5H13c1.500 0 2.200-1.300 2.200-3s-.7-3.200-2.200-3.200h-1v1.900c0 1.300-1 1.800-2.200 1.800h-3c-1 0-1.800.8-1.800 1.800v2.700c0 1.400 1.300 2.200 3 2.200z" fill="#fdd03a" /></S>);
const DocI = () => (<S c="size-4" v="0 0 16 16"><path d="M2.500 1h7.500l3.500 3.500V15h-11z" fill="#fff" stroke="#666" strokeWidth=".9" /><path d="M10 1v3.500h3.500M4.500 5h4M4.500 7.500h7M4.500 9.800h7M4.500 12h5" stroke="#555" strokeWidth=".9" /></S>);
const EditBox = () => (<S c="size-4" v="0 0 16 16"><rect x="1" y="1.500" width="10" height="10" fill="#ddd6c0" stroke="#c5bfae" strokeWidth=".7" /><path d="M14 5l1.500 1-5.500 8-2 1.500.3-2.500z" fill="#eee" stroke="#aaa" strokeWidth=".7" /></S>);
const Wrench = () => (<S c="size-4" v="0 0 21 21"><WrenchG t="translate(0 .5)" /></S>);
const FormI = () => (<S c="size-4" v="0 0 16 16"><rect x="1.500" y="1.500" width="13" height="13" fill="#e2ebf6" stroke="#6d97c4" /><rect x="7.500" y="3.500" width="5" height="3.500" rx="1" fill="#fff" stroke="#5580b5" strokeWidth=".9" /><rect x="7.500" y="9" width="5" height="3.500" rx="1" fill="#fff" stroke="#5580b5" strokeWidth=".9" /><path d="M3.500 5.200h2M3.500 10.700h2" stroke="#2d4f7c" strokeWidth="1.300" /></S>);
const Printer = () => (<S c="size-4" v="0 0 16 16"><rect x="4.500" y="1" width="7" height="5" fill="#eee" stroke="#ccc" /><rect x="1" y="5.500" width="14" height="6" rx="1.500" fill="#cfcfcf" /><rect x="4" y="9.500" width="8" height="5.500" fill="#f2f2f2" stroke="#ccc" strokeWidth=".8" /></S>);
const IdRect = () => (<S c="size-4" v="0 0 16 16"><rect x="1" y="1" width="14" height="13" fill="#ddd" stroke="#333" strokeWidth=".8" strokeDasharray="1.500 1" /><circle cx="5" cy="5" r="4.800" fill="#6d97c4" /><text x="3.500" y="8" fontSize="8" fontStyle="italic" fontWeight="700" fill="#fff" fontFamily="Liberation Serif">i</text><Cursor t="translate(7.500 6) scale(.9)" /></S>);
const SearchI = ({ c = "size-3.5" }) => (<S c={c} v="0 0 14 14"><circle cx="5.800" cy="5.800" r="4.300" stroke="#888" strokeWidth="1.100" /><path d="M9 9l4 4" stroke="#888" strokeWidth="1.400" /></S>);
const CoordI = () => (<S c="size-[15px]" v="0 0 16 16"><path d="M2.500 3.500C3 1 7 .5 8 3.500l1 5-4.500 1C3 8 2 6 2.500 3.500z" fill="#fff" stroke="#000" strokeWidth="1.500" /><path d="M5.500 3v4.500" stroke="#000" strokeWidth="1.300" /><ellipse cx="9" cy="11.800" rx="4" ry="3.600" fill="#fff" stroke="#000" strokeWidth="1.400" /><circle cx="9" cy="12" r="1.400" fill="#000" /><path d="M11 4.500l1-1M13.500 2.500l1.500-1.200M1 11l1.200.5" stroke="#000" /></S>);
const Lock = () => (<S c="h-4 w-3.5" v="0 0 14 16"><path d="M3.500 8V5c0-5 7-5 7 0v3" stroke="#888" strokeWidth="1.500" /><rect x="1" y="7.500" width="12" height="8" rx="1" fill="#666" /></S>);
const Globe = () => (<S c="size-4" v="0 0 16 16"><path d="M4.500 1.500h7L15.500 7 13 9H3L.5 7z" fill="#888" /><circle cx="8" cy="9.200" r="5.400" stroke="#777" strokeWidth=".9" /><path d="M2.500 9h11M3 12h10M8 3v12M5.500 2.500c-2 4-2 8 .5 12M10.500 2.500c2 4 2 8-.5 12" stroke="#777" strokeWidth=".8" /><path d="M2.500 4.500h11M.8 7h14.400M6 1.500L4.500 7M10 1.500L11.500 7M8 1.500V7" stroke="#ddd" strokeWidth=".6" /></S>);
const Bubble = () => (<S c="size-[17px]" v="0 0 17 17"><path d="M8.500 1a7.500 6.600 0 1 0 2 13c1.500 1.500 3 2.300 5 2.300-1.200-1-1.500-2-1.500-3.300A7.500 6.600 0 0 0 8.500 1z" fill="#666" /><circle cx="5" cy="7.800" r="1.100" fill="#fff" /><circle cx="8.500" cy="7.800" r="1.100" fill="#fff" /><circle cx="12" cy="7.800" r="1.100" fill="#fff" /></S>);

/* ---------- widgets ---------- */
const Tri = ({ dir = "down", c = "#555" }) => (
  <svg viewBox="0 0 8 8" className="block size-2 shrink-0">
    <path d={dir === "down" ? "M0 2h8L4 6.300z" : dir === "up" ? "M0 6h8L4 1.700z" : dir === "left" ? "M6 0v8L1.700 4z" : "M2 0v8l4.300-4z"} fill={c} />
  </svg>
);
const dots = (n) => Array.from({ length: n });
const GripV = () => (
  <div className="grid w-[5px] grid-cols-2 gap-x-[3px] gap-y-[2px]">{dots(12).map((_, i) => <i key={i} className="size-[1px] bg-[#bdbdbd]" />)}</div>
);
const GripH = () => (
  <div className="grid grid-cols-6 gap-x-[2px] gap-y-[3px]">{dots(12).map((_, i) => <i key={i} className="size-[1px] bg-[#bdbdbd]" />)}</div>
);
const DotsH = () => (<div className="flex gap-[2px]">{dots(6).map((_, i) => <i key={i} className="size-[1px] bg-[#c4c4c4]" />)}</div>);
const DotsV = () => (<div className="flex flex-col gap-[2px]">{dots(6).map((_, i) => <i key={i} className="size-[1px] bg-[#c4c4c4]" />)}</div>);
const Bar = ({ children, grow }) => (
  <div className={(grow ? "flex-1" : "") + " flex h-full items-center border-b-[1.1px] border-[#b8b8b8] bg-gradient-to-b from-[#fefefe] to-[#f4f4f4] pl-[5.500px] pr-[3px]"}>
    <div className="w-[7px] shrink-0"><GripV /></div>
    {children}
  </div>
);
const Slot = ({ children, off }) => (<div className={(off ? "opacity-35" : "") + " flex w-[33px] shrink-0 justify-center"}>{children}</div>);
const Sep = () => (<div className="flex w-[7px] shrink-0 justify-center"><i className="h-[19px] w-px bg-[#d9d9d9]" /></div>);
const Drop = () => (<div className="flex w-3 shrink-0 justify-center"><Tri /></div>);
const VSlot = ({ children, off, drop, on }) => (
  <div className="flex h-8 w-full items-center justify-center">
    <div className={(on ? "h-[31px] w-8 rounded-[2px] border-[1.1px] border-[#b0b0b0] bg-[#dfdfdf] " : "w-8 ") + (off ? "opacity-40 " : "") + "flex items-center justify-center"}>{children}</div>
    {drop && <Drop />}
  </div>
);
const VBar = ({ children, cls }) => (
  <div className={cls + " flex w-full flex-col items-center border-r-[1.1px] border-[#b8b8b8] bg-gradient-to-r from-white to-[#f4f4f4] pl-[2.500px]"}>
    <div className="flex h-3 shrink-0 items-center pt-[1px]"><GripH /></div>
    {children}
  </div>
);
const DockTitle = ({ children }) => (
  <div className="flex h-[21px] shrink-0 items-center pl-[4px] pr-[1px]">
    <span className="flex-1 text-[11px] tracking-[-.02px] text-[#262626]">{children}</span>
    <svg viewBox="0 0 11 11" className="mr-[3px] size-[11px]" fill="none" stroke="#666" strokeWidth=".9"><rect x=".5" y=".5" width="10" height="10" rx="1.500" /><rect x="2.500" y="4.500" width="4" height="4" rx=".6" /><path d="M4.500 4V2.500h4v4H7" /></svg>
    <svg viewBox="0 0 11 11" className="size-[11px]" fill="none" stroke="#666"><rect x=".5" y=".5" width="10" height="10" rx="1.500" strokeWidth=".9" /><path d="M3 3l5 5M8 3L3 8" strokeWidth="1.900" /></svg>
  </div>
);
const Btn = ({ children, drop, off }) => (
  <div className={(off ? "opacity-50 " : "") + "relative flex w-[25px] shrink-0 items-center justify-center"}>
    {children}
    {drop && <span className="absolute -bottom-1 right-0"><Tri /></span>}
  </div>
);
const TSep = () => (<div className="flex w-[7px] shrink-0 justify-center"><i className="h-3 w-px bg-[#dcdcdc]" /></div>);
const Check = ({ on }) => (
  <div className="flex size-[13.500px] shrink-0 items-center justify-center rounded-[1px] border-[1.1px] border-[#bdbdbd] bg-white">
    {on ? <svg viewBox="0 0 10 10" className="size-[10px]" fill="none"><path d="M1.500 5.500L4 8.500 8.500 1" stroke="#222" strokeWidth="1.700" /></svg> : null}
  </div>
);

/* ---------- trees ---------- */
const pads = ["pl-[2px]", "pl-[18px]", "pl-[34px]"];
const browser = [
  [0, "r", Folder, "/Volumes"], [0, "d", StarI, "Favorites"],
  [1, "r", Folder, "/Volumes/Macintosh HD/Users/maples/Downloads"],
  [1, "r", Folder, "/Volumes/Macintosh HD/Users/maples/GitHub"],
  [1, "r", Folder, "/Volumes/Macintosh HD/Users/maples/Scratch/144"],
  [0, "r", SBook, "Spatial Bookmarks"], [0, "d", PHome, "Project Home"], [1, "d", Db, "assam.gpkg"],
  [2, "r", Poly, "boundary", 1], [2, "r", Poly, "protected_regions", 1], [2, "r", LineI, "roads", 1],
  [2, "r", Poly, "water_polygons", 1], [2, "r", LineI, "water_polylines", 1],
  [1, "", Raster, "assam_roads.sdat"], [1, "r", Qgis, "OverlayAnalysis"],
  [1, "", Raster, "raster_assam_boundary.tif"], [1, "", Raster, "raster_assam_protected_regions.tif"],
  [1, "", Raster, "raster_assam_water_polygons.tif"], [1, "", Raster, "raster_assam_water_polylines.tif"],
  [1, "", Raster, "Rasterized_assamboundary.tif"],
];
const tpads = ["pl-[3px]", "pl-[23px]", "pl-[43px]"];
const toolbox = [
  [0, "r", Clock, "Recently used"], [0, "d", Qgis, "Mesh"], [1, "", Gear, "Rasterize mesh dataset"],
  [0, "d", Qgis, "Raster tools"], [1, "", Gear, "Convert map to raster"], [0, "d", Gdal, "GDAL"],
  [1, "d", null, "Vector conversion"], [2, "", Vec2R, "Rasterize (overwrite with attribute)"],
  [2, "", Vec2R, "Rasterize (overwrite with fixed value)"], [2, "", Vec2R, "Rasterize (vector to raster)", 1],
  [0, "d", Grass, "GRASS"], [1, "d", null, "Raster (r.*)"], [2, "", Grass, "r.surf.contour"],
  [1, "d", null, "Vector (v.*)"], [2, "", Grass, "v.to.rast"], [0, "d", Saga, "SAGA Next Gen"],
  [1, "d", null, "Raster creation tools"], [2, "", Saga, "Rasterize"], [0, "d", Cube, "WhiteboxTools"],
  [1, "d", null, "Stream Network Analysis"], [2, "", Cube, "RasterizeStreams"],
];
const Arrow = ({ k }) => (<div className="flex w-3.5 shrink-0 justify-center">{k === "r" ? <Tri dir="right" /> : k === "d" ? <Tri /> : null}</div>);

/* ---------- road raster ---------- */
const areas = [
  [[[325, 500], [430, 490], [540, 495], [600, 475], [640, 485], [690, 505], [690, 555], [640, 610], [560, 660], [450, 700], [330, 700], [320, 600]], 0.082, 1],
  [[[325, 540], [540, 530], [540, 620], [500, 680], [340, 690]], 0.025, 0],
  [[[62, 545], [120, 590], [200, 590], [240, 560], [325, 590], [325, 690], [300, 700], [230, 700], [140, 715], [70, 730], [30, 770], [15, 690], [60, 650]], 0.042, 1],
  [[[62, 545], [110, 580], [100, 620], [62, 640]], 0.07, 0],
  [[[15, 680], [50, 680], [80, 790], [40, 800]], 0.07, 0],
  [[[100, 810], [200, 760], [250, 765], [330, 775], [400, 775], [470, 760], [490, 745], [490, 780], [440, 830], [370, 870], [300, 830], [230, 840]], 0.07, 1],
  [[[690, 500], [710, 470], [840, 470], [870, 455], [960, 445], [1020, 430], [1040, 440], [960, 490], [860, 515], [790, 550], [700, 540]], 0.07, 1],
  [[[870, 460], [960, 445], [960, 495], [870, 510]], 0.07, 1],
  [[[1025, 370], [1060, 300], [1090, 310], [1100, 400], [1135, 440], [1070, 445], [1030, 410]], 0.07, 0],
  [[[1050, 330], [1110, 240], [1160, 290], [1160, 400], [1135, 440], [1080, 440]], 0.03, 0],
  [[[1110, 240], [1130, 200], [1200, 190], [1215, 260], [1210, 330], [1150, 400], [1120, 400]], 0.065, 1],
  [[[1200, 200], [1235, 150], [1300, 110], [1380, 75], [1380, 95], [1330, 145], [1260, 180], [1220, 230]], 0.065, 0],
  [[[1280, 115], [1330, 100], [1330, 150], [1290, 150]], 0.08, 0],
  [[[1290, 210], [1380, 183], [1380, 235], [1420, 255], [1420, 310], [1390, 350], [1300, 350], [1262, 365], [1250, 320], [1255, 250]], 0.36, 3],
  [[[1300, 205], [1375, 190], [1370, 270], [1330, 350], [1290, 345], [1300, 260]], 0.18, 3],
  [[[1260, 365], [1400, 345], [1350, 400], [1310, 430], [1260, 480], [1210, 500], [1170, 520], [1110, 520], [1080, 490], [1180, 440], [1200, 400]], 0.085, 0],
  [[[1170, 400], [1250, 390], [1260, 470], [1190, 470]], 0.04, 0],
  [[[1000, 550], [1060, 520], [1120, 510], [1115, 600], [1105, 670], [1070, 740], [1050, 810], [1015, 810], [1030, 700], [1030, 640], [1005, 600]], 0.065, 0],
  [[[630, 640], [720, 615], [820, 580], [830, 640], [770, 660], [760, 740], [850, 770], [850, 840], [800, 870], [740, 860], [690, 800], [640, 770], [560, 765], [560, 710], [620, 710]], 0.055, 0],
  [[[690, 640], [780, 640], [760, 710], [700, 710]], 0.06, 0],
  [[[820, 585], [900, 575], [1000, 560], [1000, 585], [930, 600], [840, 620]], 0.06, 0],
  [[[640, 1262], [720, 1248], [770, 1230], [830, 1230], [850, 1260], [825, 1310], [800, 1370], [760, 1380], [700, 1320], [650, 1290]], 0.07, 0],
  [[[720, 1250], [820, 1240], [810, 1310], [740, 1310]], 0.06, 0],
  [[[650, 1300], [800, 1350], [780, 1400], [740, 1460], [700, 1470], [670, 1480], [650, 1480]], 0.026, 2],
  [[[1430, 105], [1480, 95], [1500, 150], [1500, 230], [1420, 260], [1385, 190], [1430, 160]], 0.035, 0],
  [[[1430, 55], [1490, 25], [1510, 22], [1520, 62], [1460, 75]], 0.04, 0],
  [[[1455, 270], [1550, 240], [1520, 290], [1460, 305]], 0.03, 0],
  [[[465, 680], [525, 675], [520, 735], [455, 740]], 0.34, 3],
  [[[745, 785], [850, 770], [850, 850], [800, 870], [755, 850]], 0.09, 0],
  [[[760, 870], [850, 860], [850, 910], [770, 915]], 0.05, 0],
];
const towns = [
  [520, 750, 8, 2100], [503, 746, 6, 300], [744, 674, 5, 260], [784, 812, 5, 280], [438, 633, 2.500, 70], [331, 680, 3, 90], [217, 608, 4, 110],
  [323, 610, 3, 60], [1115, 512, 4.500, 220], [1089, 321, 4, 130], [1198, 222, 3, 80], [1220, 418, 3, 80], [1285, 222, 4, 200], [1278, 265, 2.500, 60], [1394, 212, 3, 60],
  [866, 910, 3, 70], [928, 874, 3.500, 90], [770, 1286, 4, 170], [711, 1335, 3, 80], [662, 1263, 3, 60], [1396, 332, 3, 80], [660, 712, 3, 60],
  [52, 915, 6, 110], [48, 985, 1.500, 30], [1384, 265, 3, 60], [772, 560, 5, 80], [962, 572, 7, 110], [792, 875, 3, 50], [825, 1145, 2, 40],
  [744, 803, 2.500, 40], [717, 873, 2.500, 30], [1060, 528, 7, 80], [1060, 610, 4, 40], [1440, 105, 8, 50], [1460, 172, 4, 30], [1240, 178, 3, 30], [32, 750, 4, 50], [470, 768, 6, 80], [685, 1208, 4, 40],
];
const roads = [
  [30, 680, 35, 760, 45, 820, 42, 870, 50, 920, 55, 960, 48, 1005], [55, 910, 70, 940, 84, 953], [85, 860, 100, 820, 150, 790, 200, 755, 232, 735, 250, 765, 320, 775, 350, 755, 400, 770, 470, 765, 500, 750],
  [90, 750, 130, 715, 220, 705, 240, 735], [57, 507, 65, 560, 62, 640, 50, 700], [150, 462, 165, 480, 160, 530, 145, 600], [205, 462, 200, 540, 217, 608, 240, 665, 250, 720],
  [215, 475, 225, 540, 235, 590], [200, 475, 190, 530, 170, 600, 155, 640], [328, 500, 325, 600, 330, 705], [350, 705, 400, 703, 455, 702], [433, 480, 435, 560, 438, 633], [538, 465, 540, 540, 548, 600],
  [605, 458, 620, 500, 622, 560, 630, 610], [655, 470, 660, 520], [570, 480, 573, 560, 590, 620], [640, 470, 645, 540], [395, 490, 398, 580], [505, 490, 508, 560], [540, 760, 540, 725, 560, 720, 575, 740, 570, 765, 540, 762],
  [575, 765, 640, 768, 680, 765, 760, 765], [735, 410, 770, 425, 775, 465, 700, 468, 682, 437], [820, 585, 900, 583, 960, 575, 1020, 555, 1060, 540, 1115, 512, 1180, 500],
  [865, 790, 885, 815, 930, 825, 980, 825, 1005, 790, 1020, 700, 1035, 640, 1000, 590, 965, 585], [1115, 512, 1145, 555, 1157, 605], [1125, 540, 1118, 600, 1105, 680, 1075, 720, 1060, 830, 1058, 855, 1020, 875],
  [1050, 825, 990, 870, 970, 890, 928, 874, 900, 903, 866, 910, 830, 870], [985, 875, 965, 905, 950, 937], [930, 825, 945, 850, 928, 874], [800, 880, 800, 940, 815, 990, 815, 1060, 828, 1110, 825, 1150],
  [866, 910, 850, 940, 845, 980, 850, 1015], [860, 1010, 855, 1050, 855, 1095, 875, 1105], [855, 1070, 890, 1060, 910, 1035], [790, 890, 770, 950, 765, 1005, 735, 1003, 740, 1030, 785, 1048, 815, 1035],
  [775, 930, 748, 943], [760, 1240, 758, 1210, 775, 1170, 825, 1167, 850, 1140, 890, 1132, 913, 1110, 897, 1150], [680, 1200, 700, 1215, 750, 1230, 770, 1286], [878, 1185, 850, 1240, 825, 1310, 810, 1395],
  [648, 1290, 660, 1320, 652, 1400, 647, 1505], [700, 1260, 690, 1330, 680, 1420, 670, 1490], [711, 1335, 725, 1400, 705, 1430, 700, 1480, 706, 1520], [740, 1360, 755, 1400, 738, 1470], [790, 1360, 790, 1400, 773, 1440],
  [655, 1350, 632, 1390, 640, 1430, 655, 1425], [632, 893, 618, 917], [740, 845, 715, 875, 700, 910, 687, 920], [680, 795, 663, 820, 665, 840, 685, 855, 700, 835, 700, 810, 680, 795, 685, 750], [636, 830, 660, 825], [663, 845, 668, 855, 695, 850],
  [905, 675, 850, 700, 845, 730], [850, 680, 835, 712], [820, 640, 790, 680, 770, 700, 765, 740], [1385, 180, 1440, 165, 1490, 190, 1500, 230, 1430, 265], [1428, 72, 1430, 50, 1500, 30, 1515, 20], [1536, 24, 1526, 50],
  [1444, 305, 1480, 300, 1522, 286], [1530, 235, 1530, 260, 1553, 260], [1220, 300, 1210, 340, 1190, 390], [1255, 365, 1200, 400, 1180, 440, 1120, 460, 1085, 490], [1235, 200, 1240, 150], [940, 528, 960, 550, 965, 575],
  [1285, 222, 1300, 208, 1340, 192, 1385, 180], [1115, 240, 1170, 240, 1198, 222, 1200, 190], [1255, 240, 1240, 300, 1250, 350], [790, 480, 793, 550, 800, 580], [700, 500, 700, 545, 772, 560], [695, 500, 690, 600],
  [630, 625, 590, 630, 530, 672], [60, 625, 150, 620, 217, 608, 320, 612, 438, 633], [770, 610, 744, 674, 700, 690, 660, 712, 655, 765], [850, 770, 840, 800, 845, 850], [773, 1118, 778, 1137],
  [1180, 500, 1220, 490], [1205, 508, 1218, 525], [1480, 135, 1495, 155, 1500, 190], [830, 1280, 862, 1288], [780, 1240, 835, 1218], [80, 795, 78, 750, 95, 700, 95, 660],
  [120, 590, 135, 650, 150, 700], [60, 600, 100, 650, 140, 665, 200, 650, 250, 665], [250, 640, 250, 690, 275, 700], [240, 790, 230, 820, 212, 845], [275, 780, 262, 820, 240, 843], [340, 780, 350, 830, 355, 870], [400, 780, 430, 830, 415, 862],
];
const inside = (p, x, y) => {
  let r = false;
  for (let i = 0, j = p.length - 1; i < p.length; j = i++) {
    const [a, b] = p[i], [c, d] = p[j];
    if (b > y !== d > y && x < ((c - a) * (y - b)) / (d - b) + a) r = !r;
  }
  return r;
};
const areaOf = (p) => Math.abs(p.reduce((s, [x, y], i) => { const [u, v] = p[(i + 1) % p.length]; return s + x * v - u * y; }, 0)) / 2;
function buildRoads() {
  let seed = 20250;
  const rnd = () => { seed = (seed * 1664525 + 1013904223) >>> 0; return seed / 4294967296; };
  const gauss = () => rnd() + rnd() + rnd() + rnd() - 2;
  const KX = 1.3135, KY = 0.898;
  const seen = new Set();
  const out = [];
  const put = (X, Y) => {
    X = Math.round(X); Y = Math.round(Y);
    if (X < 1 || Y < 1 || X > 2024 || Y > 1379) return;
    const k = Y * 2100 + X;
    if (seen.has(k)) return;
    seen.add(k);
    out.push(`M${X} ${Y}.5h1`);
  };
  const tx = (x) => (x - 12) * KX, ty = (y) => (y - 17) * KY;
  areas.forEach(([poly, den, mode]) => {
    const P = poly.map(([x, y]) => [tx(x), ty(y)]);
    const xs = P.map((q) => q[0]), ys = P.map((q) => q[1]);
    const x0 = Math.min(...xs), x1 = Math.max(...xs), y0 = Math.min(...ys), y1 = Math.max(...ys);
    let left = areaOf(P) * den, guard = 0;
    while (left > 0 && guard++ < 200000) {
      let x = x0 + rnd() * (x1 - x0), y = y0 + rnd() * (y1 - y0);
      if (!inside(P, x, y)) continue;
      const tone = 0.5 + 0.25 * (Math.sin(x * 0.061 + y * 0.023) + Math.sin(y * 0.083 - x * 0.037 + 1));
      if (rnd() > 0.2 + 0.8 * tone) continue;
      const vert = rnd() < (mode === 2 ? 0.95 : mode === 1 ? 0.62 : 0.45);
      let a = (vert ? Math.PI / 2 : 0) + gauss() * (mode === 1 || mode === 2 ? 0.2 : 0.6);
      if (rnd() < 0.5) a += Math.PI;
      let n = 8 + rnd() * (mode === 2 ? 70 : vert ? 46 : 26);
      if (mode === 3) n = 2 + rnd() * 8;
      const solid = mode === 3 ? 0.8 : 0.35 + rnd() * 0.4;
      while (n-- > 0) {
        if (rnd() < solid) { put(x, y); left--; }
        a += gauss() * 0.22;
        x += Math.cos(a); y += Math.sin(a);
        if (!inside(P, x, y) && rnd() < 0.15) break;
      }
    }
  });
  roads.forEach((r) => {
    let ox = 0, oy = 0;
    for (let i = 0; i + 3 < r.length; i += 2) {
      const ax = tx(r[i]), ay = ty(r[i + 1]), bx = tx(r[i + 2]), by = ty(r[i + 3]);
      const n = Math.hypot(bx - ax, by - ay);
      for (let t = 0; t < n; t += 1) {
        ox += gauss() * 0.9; oy += gauss() * 0.9; ox *= 0.965; oy *= 0.965;
        if (rnd() < 0.6) put(ax + ((bx - ax) * t) / n + ox, ay + ((by - ay) * t) / n + oy);
      }
    }
  });
  towns.forEach(([cx, cy, r, n]) => {
    for (let i = 0; i < n; i++) {
      const k = 0.4 + 1.500 * rnd();
      put(tx(cx) + gauss() * r * 1.500 * k, ty(cy) + gauss() * r * 1.200 * k);
    }
  });
  return out.join("");
}
const RoadMap = () => {
  const d = useMemo(buildRoads, []);
  return (
    <svg viewBox="0 0 2026 1381" preserveAspectRatio="none" shapeRendering="crispEdges" className="block h-[731px] w-[1072.500px] bg-black">
      <path d={d} stroke="#fff" strokeWidth="1" />
    </svg>
  );
};

const Spin = ({ v, cls }) => (
  <div className={cls + " flex rounded-[2px] border-[1.1px] border-[#b3b3b3] bg-white"}>
    <span className="flex flex-1 items-center pl-[4px]">{v}</span>
    <span className="flex w-[14px] flex-col items-center justify-center border-l-[.6px] border-[#b3b3b3] bg-gradient-to-b from-white to-[#f2f2f2]"><Tri dir="up" /><Tri /></span>
  </div>
);

export default function App() {
  return (
    <div className="h-[1396.800px] w-[2167.900px] overflow-hidden bg-white pl-[55px] pt-[37px] font-[Inter,sans-serif] text-[12px] leading-none text-[#262626] [zoom:1.8893]">
      <div className="flex h-[1287.200px] w-[2058.500px] flex-col overflow-hidden rounded-[11px] border-[1.1px] border-[#3c3c3c] bg-[#f5f5f5] shadow-[0_18px_40px_rgba(0,0,0,.42),0_0_14px_rgba(0,0,0,.12)]">
        {/* title bar */}
        <div className="flex h-[29px] shrink-0 items-center border-b-[1.1px] border-black bg-[#fdfdfd] pl-2">
          <div className="flex gap-2">
            <i className="size-3 rounded-full border-[.6px] border-[#b5261c] bg-[#db3022]" />
            <i className="size-3 rounded-full border-[.6px] border-[#6e4c12] bg-[#966b20]" />
            <i className="size-3 rounded-full border-[.6px] border-[#27661a] bg-[#3b8a25]" />
          </div>
          <div className="flex-1 pr-[61px] text-center text-[13px] font-bold tracking-[.06px] text-[#333]">*OverlayAnalysis — QGIS [Earthsys 2025]</div>
        </div>
        {/* tool bars */}
        <div className="flex h-[37.500px] shrink-0 gap-[.5px]">
          <Bar><Slot><NewDoc /></Slot><Slot><Open /></Slot><Slot><Save /></Slot><Slot><Layout /></Slot><Slot><LayoutManager /></Slot><Slot><StyleMgr /></Slot></Bar>
          <Bar><Slot><DataSource /></Slot><Slot><Geopackage /></Slot><Slot><NewShape /></Slot><Slot><Feather /></Slot><Slot><Chip /></Slot><Slot><Mesh /></Slot><Slot><Virtual /></Slot></Bar>
          <Bar>
            <Slot off><Tag /></Slot><Slot off><Diagram /></Slot><Sep /><Slot><PinTag blue /></Slot><Slot><Tag red /></Slot><Sep />
            <Slot off><PinTag /></Slot><Slot off><EyeTag /></Slot><Slot off><BadgeTag k={0} /></Slot><Slot off><BadgeTag k={1} /></Slot><Slot off><BadgeTag k={2} /></Slot>
          </Bar>
          <Bar><Slot><Help /></Slot></Bar>
          <Bar grow>
            <div className="relative"><Slot off><Pencils /></Slot><span className="absolute bottom-[-3px] right-[2px]"><Tri /></span></div>
            <Slot off><Pencil /></Slot><Slot off><Save pencil /></Slot><Slot off><SegLine /></Slot><Drop />
            <Slot off><VStar /></Slot><Slot off><Vertex /></Slot><Drop />
            <Slot off><FieldsEdit /></Slot><Slot off><Trash /></Slot><Slot off><Scissors /></Slot><Slot off><Copy /></Slot><Slot off><Paste /></Slot><Slot off><Undo /></Slot><Slot off><Undo flip /></Slot>
          </Bar>
        </div>
        <div className="flex h-[39px] shrink-0"><Bar grow><Slot><TableRefresh /></Slot></Bar></div>

        <div className="flex min-h-0 flex-1">
          {/* map tool column */}
          <div className="flex w-[50.500px] shrink-0 flex-col gap-[.5px]">
            <VBar cls="h-[528px]">
              <VSlot><Hand /></VSlot><VSlot><PanSel /></VSlot><VSlot><ZoomIn /></VSlot><VSlot><ZoomOut /></VSlot><VSlot><ZoomFull /></VSlot><VSlot><ZoomSel /></VSlot><VSlot><ZoomLayer /></VSlot><VSlot><ZoomNative /></VSlot>
              <VSlot><ZoomLast /></VSlot><VSlot off><ZoomLast next /></VSlot><VSlot><MapScroll /></VSlot><VSlot><Map3d /></VSlot><VSlot><BookmarkNew /></VSlot><VSlot><MapScroll mark /></VSlot><VSlot><Clock /></VSlot><VSlot><Refresh /></VSlot>
            </VBar>
            <VBar cls="h-[143.500px]"><VSlot off drop><SelRect /></VSlot><VSlot off drop><SelExpr /></VSlot><VSlot drop><Desel /></VSlot><VSlot drop><SelPin /></VSlot></VBar>
            <VBar cls="flex-1">
              <VSlot on><Identify /></VSlot><VSlot off><Abacus /></VSlot><VSlot on><Gear /></VSlot><VSlot><Sigma /></VSlot><VSlot off drop><TableI /></VSlot><VSlot drop><Ruler /></VSlot><VSlot on><Tips /></VSlot><VSlot off drop><RunGear /></VSlot>
            </VBar>
          </div>

          {/* left dock */}
          <div className="flex w-[377.800px] shrink-0 flex-col pl-[1.300px]">
            <DockTitle>Browser</DockTitle>
            <div className="flex h-[28px] shrink-0 items-center pl-[3.500px]">
              <Btn><AddBox /></Btn><Btn><Refresh c="size-4" /></Btn><Btn><FilterI /></Btn><Btn><Collapse /></Btn><Btn><Info c="size-3.5" /></Btn>
            </div>
            <div className="mt-[1px] flex h-[375px] shrink-0 flex-col border-[.6px] border-[#b8b8b8] bg-white">
              <div className="flex min-h-0 flex-1">
                <div className="flex min-w-0 flex-1 flex-col overflow-hidden pt-[.8px]">
                  {browser.map(([d, k, Ic, t, sel], i) => (
                    <div key={i} className={(sel ? "bg-[#dcdcdc] text-black " : "") + pads[d] + " flex h-[18px] shrink-0 items-center"}>
                      <Arrow k={k} /><span className="ml-[4px] mr-[6px]"><Ic c="size-4" /></span><span className="whitespace-nowrap text-[12.500px] tracking-[.17px]">{t}</span>
                    </div>
                  ))}
                </div>
                <div className="flex w-[14px] shrink-0 flex-col border-l-[.6px] border-[#c4c4c4] bg-[#ececec]">
                  <div className="flex h-[14px] items-center justify-center border-b-[1.1px] border-[#c4c4c4] bg-[#fafafa]"><Tri dir="up" /></div>
                  <div className="h-[149px] border-b-[1.1px] border-[#c4c4c4] bg-gradient-to-r from-white to-[#f4f4f4]" />
                  <div className="flex-1" />
                  <div className="flex h-[14px] items-center justify-center border-t-[1.1px] border-[#c4c4c4] bg-[#fafafa]"><Tri /></div>
                </div>
              </div>
              <div className="flex h-[14px] shrink-0 border-t-[.6px] border-[#c4c4c4] bg-[#ececec]">
                <div className="flex w-[14px] items-center justify-center border-r-[1.1px] border-[#c4c4c4] bg-[#fafafa]"><Tri dir="left" /></div>
                <div className="w-[299px] border-r-[1.1px] border-[#c4c4c4] bg-gradient-to-b from-white to-[#f4f4f4]" />
                <div className="flex-1" />
                <div className="flex w-[14px] items-center justify-center border-l-[1.1px] border-[#c4c4c4] bg-[#fafafa]"><Tri dir="right" /></div>
                <div className="w-[14px] border-l-[.6px] border-[#c4c4c4] bg-[#f5f5f5]" />
              </div>
            </div>
            <div className="flex h-[6px] shrink-0 items-center justify-center pl-1"><DotsH /></div>
            <DockTitle>Layers</DockTitle>
            <div className="flex h-[27px] shrink-0 items-center pl-[3.500px]">
              <Btn><Brush /></Btn><Btn><AddGroup /></Btn><Btn drop><EyeI /></Btn><Btn drop><FilterI /></Btn><Btn><ExprFilter /></Btn><Drop /><Btn><Collapse down /></Btn><Btn><Collapse /></Btn><Btn><AddBox minus /></Btn>
            </div>
            <div className="mt-[2.500px] flex-1 border-[.6px] border-[#b8b8b8] bg-white pt-[.6px]">
              <div className="flex h-[18px] items-center bg-[#dcdcdc] pl-[3.500px] text-[13px] font-bold text-black">
                <Arrow k="d" /><span className="ml-[6px] mr-[7px]"><Check on /></span><Raster /><span className="ml-[6px] border-b-[1.600px] border-black leading-[13px] tracking-[.16px]">rasterized_roads</span>
              </div>
              <div className="flex h-[17.500px] items-center pl-[44px]">Band 1</div>
              <div className="flex h-[191.500px] pl-[44px]">
                <div className="w-8 bg-gradient-to-b from-white to-black" />
                <div className="flex flex-col justify-between py-[1.500px] pl-[5.500px]"><span>1</span><span>0</span></div>
              </div>
              <div className="pt-[1px]">
                {[["roads", 0, <i key="a" className="h-px w-4 bg-[#444]" />], ["water_polylines", 0, <i key="b" className="h-px w-4 bg-[#4a4fd0]" />], ["protected_regions", 0, <i key="c" className="size-4 border-[.6px] border-[#222] bg-[#0c9b14]" />], ["water_polygons", 0, <i key="d" className="size-4 border-[.6px] border-[#222] bg-[#0b11c4]" />], ["boundary", 1, <i key="e" className="size-4 border-[.6px] border-[#444] bg-[#fdbf6f]" />]].map(([t, on, sw]) => (
                  <div key={t} className="flex h-[18px] items-center pl-[24px]">
                    <Check on={on} /><span className="ml-[6.500px] mr-[6.500px] flex w-4">{sw}</span>
                    <span className={on ? "text-[13px] font-bold" : "text-[13px] font-bold italic tracking-[.22px] text-[#808080]"}>{t}</span>
                  </div>
                ))}
              </div>
            </div>
          </div>

          {/* canvas */}
          <div className="flex w-[7px] shrink-0 flex-col items-center pt-[569px]"><DotsV /></div>
          <div className="w-[1126px] shrink-0 border-[.6px] border-[#b8b8b8] bg-white pl-[26.500px] pt-[208.700px]"><RoadMap /></div>
          <div className="flex w-[7px] shrink-0 flex-col items-center pt-[569px]"><DotsV /></div>

          {/* right dock */}
          <div className="-mb-[3.500px] flex min-w-0 flex-1 flex-col pr-[.8px]">
            <DockTitle>Processing Toolbox</DockTitle>
            <div className="flex h-[28px] shrink-0 items-center pl-[3px]">
              <Btn drop><RedGears /></Btn><Btn drop><Python /></Btn><Btn><Clock simple c="size-4" /></Btn><Btn><DocI /></Btn><TSep /><Btn off><EditBox /></Btn><TSep /><Btn><Wrench /></Btn>
            </div>
            <div className="mt-[1.500px] flex h-[24.500px] shrink-0 items-center rounded-[2px] border-[1.1px] border-[#b3b3b3] bg-white pl-[8px] pr-[8px]">
              <SearchI /><span className="ml-[6px] flex-1 text-[12.500px]">rasterize</span>
              <svg viewBox="0 0 13 11" className="h-[11px] w-[13px]"><path d="M4 0h9v11H4L0 5.500z" fill="#888" /><path d="M5 2.800l5.400 5.400M10.400 2.800L5 8.200" stroke="#fff" strokeWidth="1" /></svg>
            </div>
            <div className="h-[468.500px] shrink-0 border-[.6px] border-[#b8b8b8] bg-white">
              {toolbox.map(([d, k, Ic, t, sel], i) => (
                <div key={i} className={(sel ? "bg-[#dcdcdc] text-black " : "") + (Ic ? "h-[18px] " : "h-[16px] ") + tpads[d] + " flex items-center"}>
                  {(k || d === 0) && <Arrow k={k} />}
                  {Ic && <span className={(k ? "ml-[6px]" : "ml-0") + " mr-[6.500px]"}>{!k && d > 0 ? <span className="flex pl-[20px]"><Ic c="size-4" simple /></span> : <Ic c="size-4" simple />}</span>}
                  <span className={(Ic ? "" : "ml-[6.500px] ") + "whitespace-nowrap text-[12.500px] tracking-[.14px]"}>{t}</span>
                </div>
              ))}
            </div>
            <div className="mt-[2px] flex h-[27px] shrink-0 items-start border-t-[1.1px] border-[#b8b8b8] text-[13px]">
              <div className="flex h-[23.500px] w-[103.500px] items-center justify-center rounded-b-[3px] border-[1.1px] border-t-0 border-[#b3b3b3] bg-[#e3e3e3] tracking-[-.1px]">Layer Styling</div>
              <div className="-mt-[1.100px] flex h-[26.500px] w-[143px] items-center justify-center rounded-b-[3px] border-[1.1px] border-t-0 border-[#b3b3b3] bg-[#fbfbfb] pt-[1px] tracking-[-.08px]">Processing Toolbox</div>
            </div>
            <div className="flex h-[5.500px] shrink-0 items-center justify-center pl-2"><DotsH /></div>
            <DockTitle>Identify Results</DockTitle>
            <div className="flex h-[27px] shrink-0 items-center pl-[3.500px]">
              <Btn><FormI /></Btn><TSep /><Btn><Collapse down /></Btn><Btn><Collapse /></Btn><Btn><Collapse down star /></Btn><TSep /><Btn><Desel c="size-[17px]" /></Btn><TSep /><Btn><Copy c="size-[17px]" /></Btn><Btn><Printer /></Btn><TSep /><Btn><IdRect /></Btn><div className="w-[11px]"><Drop /></div><Btn drop><Wrench /></Btn><TSep /><Btn><Help c="size-4" /></Btn>
            </div>
            <div className="mt-[2.500px] flex min-h-0 flex-1 flex-col border-[.6px] border-[#b8b8b8] bg-white">
              <div className="flex h-[17.500px] shrink-0 items-stretch border-b-[1.1px] border-[#b3b3b3] bg-gradient-to-b from-white to-[#efefef] text-[11px] text-black">
                <span className="flex w-[156.500px] items-center border-r-[.6px] border-[#c4c4c4] pl-[2.300px] pt-[1px]">Feature</span><span className="flex items-center pl-[2.700px] pt-[1px]">Value</span>
              </div>
            </div>
            <div className="flex h-[35.500px] shrink-0 items-center pl-[5px] pr-[5px] text-[12.500px]">
              <span className="w-[41px] tracking-[.1px]">Mode</span>
              <div className="flex h-[24px] flex-1 items-center rounded-[2px] border-[1.1px] border-[#b3b3b3] bg-gradient-to-b from-white to-[#f2f2f2] pl-[4px] pr-[7px] text-black"><span className="flex-1 tracking-[.2px]">Current Layer</span><Tri /></div>
            </div>
            <div className="flex h-[35.500px] shrink-0 items-start pl-[5px] pt-[1.400px] text-[12.500px]">
              <span className="flex h-[24px] w-[36px] items-center text-[#444]">View</span>
              <div className="flex h-[24px] w-[79px] items-center rounded-[2px] border-[1.1px] border-[#cfcfcf] pl-[4px] pr-[7px] text-[#a8a8a8]"><span className="flex-1">Tree</span><Tri c="#bbb" /></div>
            </div>
          </div>
        </div>

        {/* status bar */}
        <div className="flex h-[31px] shrink-0 items-center pl-[3.500px] pr-[7px] pt-[.5px] text-[11.500px] tracking-[-.1px]">
          <div className="flex h-[23px] w-[214px] items-center rounded-[2px] border-[1.1px] border-[#b3b3b3] bg-white pl-[8px] text-[12.500px] text-[#7a7a7a]"><SearchI /><span className="ml-[6px] tracking-[.12px]">Type to locate (⌘K)</span></div>
          <div className="flex-1" />
          <span className="w-[61px]">Coordinate</span>
          <div className="flex h-[22px] w-[111.500px] items-center justify-center rounded-[2px] border-[1.1px] border-[#b3b3b3] bg-white text-[12px] tracking-[-.2px]">709518,2959746</div>
          <span className="ml-[4.500px] w-[29px]"><CoordI /></span>
          <span className="w-[32px] text-black">Scale</span>
          <div className="flex h-[24px] w-[92px] rounded-[2px] border-[1.1px] border-[#b3b3b3] bg-white text-[12px]"><span className="flex flex-1 items-center pl-[2px]">1:1663332</span><span className="flex w-[20px] items-center justify-center border-l-[.6px] border-[#c4c4c4] bg-gradient-to-b from-white to-[#f2f2f2]"><Tri /></span></div>
          <span className="ml-[12px] w-[22px]"><Lock /></span>
          <span className="w-[52px] text-black">Magnifier</span>
          <Spin v="100%" cls="h-[23px] w-[92.500px] text-[12px]" />
          <span className="ml-[10px] w-[52px]">Rotation</span>
          <Spin v="0.0 °" cls="h-[22px] w-[92.500px] text-[12px]" />
          <span className="ml-[7px] mr-[5.500px]"><Check on /></span>
          <span className="w-[53px]">Render</span>
          <span className="mr-[2px]"><Globe /></span>
          <span className="w-[91px] text-[11.500px] tracking-[-.22px] text-black">EPSG:32646</span>
          <Bubble />
        </div>
      </div>
    </div>
  );
}
